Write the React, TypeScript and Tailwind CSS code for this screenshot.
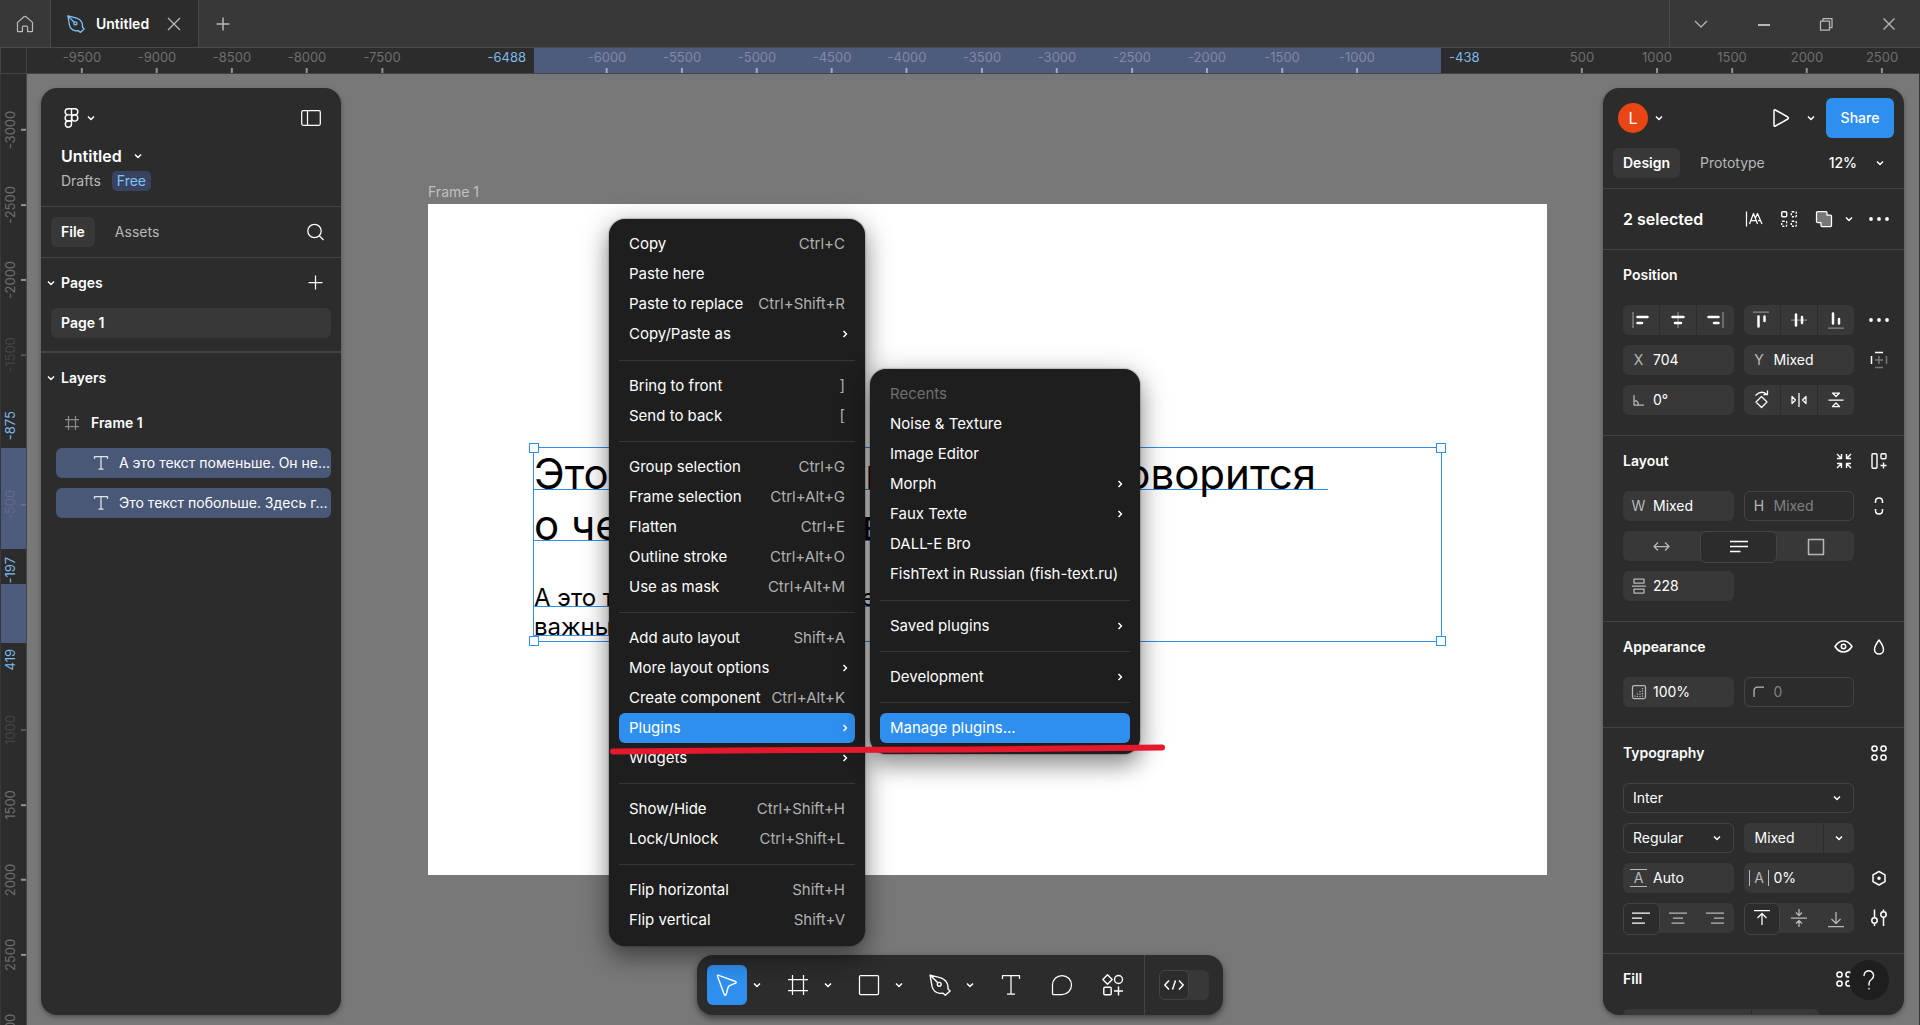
import type { ReactNode } from 'react';

type IconProps = { w?: number; h?: number; sw?: number; className?: string; children: ReactNode };

function Icon({ w = 30, h = 30, sw = 1.25, className, children }: IconProps) {
    return (
        <svg
            width={w}
            height={h}
            viewBox={`0 0 ${w} ${h}`}
            fill="none"
            stroke="currentColor"
            strokeWidth={sw}
            strokeLinejoin="round"
            className={className}
            aria-hidden="true"
        >
            {children}
        </svg>
    );
}

const Chevron = ({ className }: { className?: string }) => (
    <Icon w={10} h={10} sw={1.5} className={className}>
        <path d="M2 3.5l3 3 3-3" />
    </Icon>
);

const ChevronRight = () => (
    <Icon w={10} h={10} sw={1.5} className="text-white">
        <path d="M3.5 2l3 3-3 3" />
    </Icon>
);

const Pen = ({ size, sw = 1.25 }: { size: number; sw?: number }) => (
    <svg width={size} height={size} viewBox="0 0 24 24" fill="none" stroke="currentColor" strokeWidth={sw} strokeLinejoin="round" aria-hidden="true">
        <path d="M1.2 1.2 13 4.2q6.6 2.4 7.6 8.8l.2 3.3 2.2 2.2-5.2 4.8-2.4-2.4-3.9.2Q5 20 3.3 13.5z" />
        <path d="M1.2 1.2l8.4 8.4" />
        <circle cx="11.2" cy="11.2" r="2.1" />
    </svg>
);

const Dots = () => (
    <Icon>
        <g fill="currentColor" stroke="none">
            <circle cx="7" cy="15" r="1.9" />
            <circle cx="15" cy="15" r="1.9" />
            <circle cx="23" cy="15" r="1.9" />
        </g>
    </Icon>
);

const Styles = () => (
    <Icon sw={1.5}>
        <circle cx="10.5" cy="10.5" r="2.6" />
        <circle cx="19.5" cy="10.5" r="2.6" />
        <circle cx="10.5" cy="19.5" r="2.6" />
        <circle cx="19.5" cy="19.5" r="2.6" />
    </Icon>
);

/* ---------- Rulers ---------- */

type Mark = { v: number; tone: string; tick?: string };

const plain = 'text-[#6e6e6e]';
const xMarks: Mark[] = [
    ...[-9500, -9000, -8500, -8000, -7500].map((v) => ({ v, tone: plain, tick: 'bg-[#949494]' })),
    ...[-6000, -5500, -5000, -4500, -4000, -3500, -3000, -2500, -2000, -1500, -1000].map((v) => ({
        v,
        tone: 'text-[#7f89a6]',
        tick: 'bg-[#a3abc0]',
    })),
    ...[500, 1000, 1500, 2000, 2500].map((v) => ({ v, tone: plain, tick: 'bg-[#949494]' })),
];

const yMarks: Mark[] = [
    { v: -3000, tone: plain, tick: 'bg-[#949494]' },
    { v: -2500, tone: plain, tick: 'bg-[#949494]' },
    { v: -2000, tone: plain, tick: 'bg-[#949494]' },
    { v: -1500, tone: 'text-[#444444]', tick: 'bg-[#555555]' },
    { v: -500, tone: 'text-[#5f6a89]', tick: 'bg-[#66718f]' },
    { v: 1000, tone: 'text-[#444444]', tick: 'bg-[#555555]' },
    { v: 1500, tone: plain, tick: 'bg-[#949494]' },
    { v: 2000, tone: plain, tick: 'bg-[#949494]' },
    { v: 2500, tone: plain, tick: 'bg-[#949494]' },
    { v: 3000, tone: plain, tick: 'bg-[#949494]' },
];

const ZOOM = 0.15;
const toX = (v: number) => 55 + Math.round((v + 9500) * ZOOM);
const toY = (v: number) => 56 + Math.round((v + 3000) * ZOOM);

function TopRuler() {
    return (
        <div className="flex h-[26px] shrink-0 border-b border-[#444444] bg-[#2c2c2c] text-[13px] leading-[18px]">
            <div className="w-[27px] shrink-0 border-r border-l border-[#444444]" />
            <div className="relative flex-1 overflow-hidden">
                <div className="absolute inset-y-0 bg-[#4f5b7c]" style={{ left: toX(-6488), width: toX(-438) - toX(-6488) }} />
                {xMarks.map((m) => (
                    <div key={m.v} className="absolute inset-y-0 flex -translate-x-1/2 flex-col items-center justify-between" style={{ left: toX(m.v) }}>
                        <span className={m.tone}>{m.v}</span>
                        <span className={`h-[5px] w-0.5 ${m.tick}`} />
                    </div>
                ))}
                <span className="absolute -translate-x-full pr-2 text-[#7cb8ea]" style={{ left: toX(-6488) }}>-6488</span>
                <span className="absolute pl-2 text-[#7cb8ea]" style={{ left: toX(-438) }}>-438</span>
            </div>
        </div>
    );
}

function SideRuler() {
    return (
        <div className="relative w-[26px] shrink-0 overflow-hidden border-r border-[#444444] bg-[#2c2c2c] text-[13px] leading-[18px]">
            <div className="absolute inset-x-0 bg-[#4f5b7c]" style={{ top: toY(-875) - 1, height: toY(-197) - toY(-875) }} />
            <div className="absolute inset-x-0 bg-[#4f5b7c]" style={{ top: 510, height: toY(419) - 510 }} />
            {yMarks.map((m) => (
                <div key={m.v} className="absolute inset-x-0 flex -translate-y-1/2 items-center justify-between" style={{ top: toY(m.v) }}>
                    <span className={`rotate-180 [writing-mode:vertical-rl] ${m.tone}`}>{m.v}</span>
                    <span className={`h-0.5 w-[5px] ${m.tick}`} />
                </div>
            ))}
            <span className="absolute top-[337px] rotate-180 text-[#7cb8ea] [writing-mode:vertical-rl]">-875</span>
            <span className="absolute top-[483px] rotate-180 text-[#7cb8ea] [writing-mode:vertical-rl]">-197</span>
            <span className="absolute top-[575px] rotate-180 text-[#7cb8ea] [writing-mode:vertical-rl]">419</span>
        </div>
    );
}

/* ---------- Title bar ---------- */

function TitleBar() {
    return (
        <header className="flex h-12 shrink-0 items-stretch border-b border-[#4a4a4a] bg-[#383838] text-[#b8b8b8]">
            <button aria-label="Home" className="flex w-[50px] items-center justify-center">
                <Icon w={18} h={18}>
                    <path d="M1.5 7.4 8 1.8q1-.8 2 0l6.500 5.600V16q0 .6-.6.6h-4.300V12q0-1-1-1H7.400q-1 0-1 1v4.600H2.100q-.6 0-.6-.6z" />
                </Icon>
            </button>
            <div className="flex w-[149px] items-center border-x border-[#4a4a4a] bg-[#2c2c2c] pr-4 pl-4">
                <span className="text-[#7cc4f8]"><Pen size={18} sw={1.7} /></span>
                <span className="ml-[11px] flex-1 text-sm font-semibold text-white">Untitled</span>
                <button aria-label="Close tab">
                    <Icon w={16} h={16}><path d="M2 2l12 12M14 2 2 14" /></Icon>
                </button>
            </div>
            <button aria-label="New tab" className="flex w-12 items-center justify-center">
                <Icon w={16} h={16} sw={1.5}><path d="M8 1.500v13M1.500 8h13" /></Icon>
            </button>
            <div className="ml-auto flex w-[251px] border-l border-[#4a4a4a]">
                <button aria-label="Tabs" className="flex flex-1 items-center justify-center">
                    <Icon w={16} h={16}><path d="M2 5l6 6 6-6" /></Icon>
                </button>
                <button aria-label="Minimize" className="flex flex-1 items-center justify-center">
                    <Icon w={16} h={16} sw={2}><path d="M2 9h12" /></Icon>
                </button>
                <button aria-label="Restore" className="flex flex-1 items-center justify-center">
                    <Icon w={16} h={16}><path d="M2.500 5h9v9h-9zM5 5V2.500h9v9h-2.500" /></Icon>
                </button>
                <button aria-label="Close" className="flex flex-1 items-center justify-center">
                    <Icon w={16} h={16}><path d="M2.500 2.500l11 11M13.500 2.500l-11 11" /></Icon>
                </button>
            </div>
        </header>
    );
}

/* ---------- Left panel ---------- */

function TextLayer({ name }: { name: string }) {
    return (
        <li className="pl-[5px]">
            <button className="flex h-[30px] w-full items-center rounded-md bg-[#4a5878] pl-[37px] whitespace-nowrap">
                <Icon w={16} h={16} className="shrink-0 text-[#dfe3ec]"><path d="M1.500 4V1.500h13V4M8 1.500v12.500M5.500 14h5" /></Icon>
                <span className="ml-2.5">{name}</span>
            </button>
        </li>
    );
}

function LeftPanel() {
    return (
        <aside className="my-3.5 mb-2.5 ml-3.5 flex w-[300px] shrink-0 flex-col rounded-2xl bg-[#2c2c2c] shadow-[0_2px_5px_rgba(0,0,0,0.35)]">
            <div className="h-[119px] border-b border-[#444444] px-5 pt-[15px]">
                <div className="flex h-[30px] items-center justify-between">
                    <button aria-label="Main menu" className="flex items-center gap-1.5 pl-[3px]">
                        <Icon w={16} h={20} sw={1.4}>
                            <path d="M7.500.8H4.200a3.050 3.050 0 0 0 0 6.100h3.300zM7.500.8h3.300a3.050 3.050 0 0 1 0 6.100H7.500zM7.500 6.900H4.200a3.050 3.050 0 0 0 0 6.100h3.300z" />
                            <circle cx="10.700" cy="10" r="3.100" />
                            <path d="M7.500 13H4.200a3.100 3.100 0 1 0 3.300 3.100z" />
                        </Icon>
                        <Chevron />
                    </button>
                    <button aria-label="Minimize UI">
                        <Icon w={20} h={20}><rect x=".7" y="2.700" width="18.600" height="14.600" rx="1.500" /><path d="M6.500 2.700v14.600" /></Icon>
                    </button>
                </div>
                <button className="mt-[13px] flex items-center gap-[11px] text-base leading-5 font-semibold">
                    Untitled
                    <Chevron />
                </button>
                <div className="mt-[5px] flex items-center gap-[11px] leading-5">
                    <a href="#drafts" className="text-[#b8b8b8]">Drafts</a>
                    <span className="rounded-[5px] bg-[#394360] px-[5px] text-[#7cc4f8]">Free</span>
                </div>
            </div>
            <div className="flex h-[51px] items-center border-b border-[#444444] px-2.5">
                <button className="h-[30px] rounded-md bg-[#383838] px-2.5 font-semibold">File</button>
                <button className="ml-2.5 h-[30px] px-2.5 text-[#b8b8b8]">Assets</button>
                <button aria-label="Search" className="ml-auto">
                    <Icon><circle cx="13.500" cy="14" r="6.700" /><path d="M18.500 19l4 4" /></Icon>
                </button>
            </div>
            <div className="border-b-2 border-[#444444] px-2.5 pb-[13px]">
                <div className="flex h-[50px] items-center">
                    <button className="-ml-[5px] flex items-center gap-[5px] font-semibold"><Chevron /> Pages</button>
                    <button aria-label="Add page" className="ml-auto"><Icon><path d="M14.500 7.500v14M7.500 14.500h14" /></Icon></button>
                </div>
                <button className="flex h-[30px] w-full items-center rounded-md bg-[#383838] px-2.5 font-semibold">Page 1</button>
            </div>
            <div className="px-2.5">
                <button className="-ml-[5px] flex h-[50px] items-center gap-[5px] font-semibold"><Chevron /> Layers</button>
                <ul className="mt-[5px] flex flex-col gap-2.5">
                    <li>
                        <button className="flex h-[30px] items-center pl-3 font-semibold">
                            <Icon w={18} h={18} className="mr-2.5 text-[#8a8a8a]"><path d="M5.500 2v14M12.500 2v14M2 5.500h14M2 12.500h14" /></Icon>
                            Frame 1
                        </button>
                    </li>
                    <TextLayer name="А это текст поменьше. Он не..." />
                    <TextLayer name="Это текст побольше. Здесь г..." />
                </ul>
            </div>
        </aside>
    );
}

/* ---------- Right panel ---------- */

function Section({ title, actions, children }: { title: string; actions?: ReactNode; children: ReactNode }) {
    return (
        <section className="border-b border-[#444444] pr-2.5 pb-5 pl-5">
            <div className="mb-[5px] flex h-[50px] items-center">
                <h2 className="flex-1 font-semibold">{title}</h2>
                <div className="flex gap-[5px]">{actions}</div>
            </div>
            <div className="grid grid-cols-[1fr_1fr_30px] gap-2.5">{children}</div>
        </section>
    );
}

function Field({ label, icon, value, dim }: { label: string; icon: ReactNode; value: string; dim?: boolean }) {
    return (
        <label className={`flex h-[30px] items-center rounded-md border ${dim ? 'border-[#444444]' : 'border-[#383838] bg-[#383838]'}`}>
            <span className="flex w-[29px] shrink-0 justify-center text-[#b8b8b8]">{icon}</span>
            <input aria-label={label} defaultValue={value} className={`w-0 flex-1 bg-transparent outline-none ${dim ? 'text-[#808080]' : 'text-white'}`} />
        </label>
    );
}

function ButtonGroup({ items }: { items: [string, ReactNode][] }) {
    return (
        <div className="grid h-[30px] grid-cols-3 gap-px overflow-hidden rounded-md">
            {items.map(([label, icon]) => (
                <button key={label} aria-label={label} className="flex items-center justify-center bg-[#383838]">
                    {icon}
                </button>
            ))}
        </div>
    );
}

function Segmented({ items, active, wide }: { items: [string, ReactNode][]; active: number; wide?: boolean }) {
    return (
        <div className={`grid h-[30px] grid-cols-3 rounded-md bg-[#383838] ${wide ? 'col-span-2' : ''}`}>
            {items.map(([label, icon], i) => (
                <button
                    key={label}
                    aria-label={label}
                    aria-pressed={i === active}
                    className={`flex items-center justify-center rounded-md border ${i === active ? 'border-[#444444] bg-[#2c2c2c] text-white' : 'border-transparent text-[#b8b8b8]'}`}
                >
                    {icon}
                </button>
            ))}
        </div>
    );
}

const IconButton = ({ label, children }: { label: string; children: ReactNode }) => (
    <button aria-label={label} className="flex size-[30px] items-center justify-center">{children}</button>
);

function DropDown({ label, value, className = '' }: { label: string; value: string; className?: string }) {
    return (
        <label className={`relative flex h-[30px] items-center rounded-md border border-[#444444] ${className}`}>
            <select aria-label={label} defaultValue={value} className="h-full w-full appearance-none bg-transparent pl-[9px] outline-none">
                <option>{value}</option>
            </select>
            <Chevron className="pointer-events-none absolute right-[11px]" />
        </label>
    );
}

function RightPanel() {
    return (
        <aside className="mt-3.5 mr-[15px] mb-2.5 ml-auto w-[301px] shrink-0 overflow-hidden rounded-2xl bg-[#2c2c2c] shadow-[0_2px_5px_rgba(0,0,0,0.35)]">
            <div className="border-b border-[#444444] p-2.5">
                <div className="flex h-10 items-center">
                    <button aria-label="Account" className="flex items-center gap-1.5 pl-[5px]">
                        <span className="flex size-[30px] items-center justify-center rounded-full bg-[#ea4514] text-base">L</span>
                        <Chevron />
                    </button>
                    <button aria-label="Present" className="ml-auto">
                        <Icon w={20} h={20} sw={1.5}><path d="M3 2.800v14.400q0 1.600 1.400.8l12.400-7q1.400-1 0-2l-12.400-7Q3 1.200 3 2.800z" /></Icon>
                    </button>
                    <button aria-label="Present options" className="mr-2.5 ml-[15px]"><Chevron /></button>
                    <button className="h-10 w-[68px] rounded-md bg-[#2f8fee] font-medium">Share</button>
                </div>
                <div className="mt-2.5 flex h-[30px] items-center">
                    <button className="h-[30px] rounded-md bg-[#383838] px-2.5 font-semibold">Design</button>
                    <button className="ml-2.5 px-2.5 text-[#b8b8b8]">Prototype</button>
                    <button className="mr-[9px] ml-auto flex items-center gap-[18px] font-medium">12% <Chevron /></button>
                </div>
            </div>

            <div className="flex h-[61px] items-center border-b border-[#444444] pr-2.5 pl-5">
                <h2 className="flex-1 text-base font-semibold">2 selected</h2>
                <IconButton label="Scale text">
                    <Icon><path d="M7.500 7.500v15M10.500 20l4-10.500 4 10.500M12 16.500h5M16.500 14l2-4.500 4.500 10.500M19 16.500h2.500" /></Icon>
                </IconButton>
                <span className="w-[5px]" />
                <IconButton label="Arrange">
                    <Icon sw={1.4}>
                        <rect x="7.700" y="7.700" width="5" height="5" rx="1" />
                        <g strokeDasharray="2 1.400">
                            <rect x="17.300" y="7.700" width="5" height="5" rx="1" />
                            <rect x="7.700" y="17.300" width="5" height="5" rx="1" />
                            <rect x="17.300" y="17.300" width="5" height="5" rx="1" />
                        </g>
                    </Icon>
                </IconButton>
                <span className="w-[5px]" />
                <IconButton label="Union">
                    <Icon><path fill="#777777" d="M8.500 7.500H17q1 0 1 1V11h3.500q1 0 1 1v9.500q0 1-1 1H13q-1 0-1-1V18.500H8.500q-1 0-1-1v-9q0-1 1-1z" /></Icon>
                </IconButton>
                <button aria-label="Boolean options" className="mr-2.5 ml-[5px]"><Chevron /></button>
                <IconButton label="More"><Dots /></IconButton>
            </div>

            <Section title="Position">
                <ButtonGroup
                    items={[
                        ['Align left', <Icon key="i"><path stroke="#8a8a8a" d="M7 7v16" /><path strokeWidth="2.500" strokeLinecap="round" d="M11.500 12h10M11.500 18h4.500" /></Icon>],
                        ['Align horizontal centers', <Icon key="i"><path stroke="#8a8a8a" d="M15 7v16" /><path strokeWidth="2.500" strokeLinecap="round" d="M9.500 12h11M12 18h6" /></Icon>],
                        ['Align right', <Icon key="i"><path stroke="#8a8a8a" d="M23 7v16" /><path strokeWidth="2.500" strokeLinecap="round" d="M8.500 12h10M14 18h4.500" /></Icon>],
                    ]}
                />
                <ButtonGroup
                    items={[
                        ['Align top', <Icon key="i"><path stroke="#8a8a8a" d="M6 7h16" /><path strokeWidth="2.500" strokeLinecap="round" d="M11.500 11.500v10M17.500 11.500V16" /></Icon>],
                        ['Align vertical centers', <Icon key="i"><path stroke="#8a8a8a" d="M7 15h16" /><path strokeWidth="2.500" strokeLinecap="round" d="M12 9.500v11M18 12v6" /></Icon>],
                        ['Align bottom', <Icon key="i"><path stroke="#8a8a8a" d="M7 23h16" /><path strokeWidth="2.500" strokeLinecap="round" d="M12 8.500v10M18 14v4.500" /></Icon>],
                    ]}
                />
                <IconButton label="More position options"><Dots /></IconButton>

                <Field label="X position" icon="X" value="704" />
                <Field label="Y position" icon="Y" value="Mixed" />
                <IconButton label="Constraints">
                    <Icon sw={1.500}><path d="M11 7.500h8M7.500 11v8" /><path stroke="#777777" d="M15 11v8M11 15h8M22.500 11v8M11 22.500h8" /></Icon>
                </IconButton>

                <Field label="Rotation" value="0°" icon={<Icon w={16} h={16}><path d="M3 3v10h10M3 8.500q4.500 0 4.500 4.500" /></Icon>} />
                <ButtonGroup
                    items={[
                        ['Rotate 90°', <Icon key="i"><path d="M14.500 11.500l5.500 5.500-5.500 5.500L9 17zM8.500 10.500q5.500-6 11.500-1M20.500 5.500v4h-4" /></Icon>],
                        ['Flip horizontal', <Icon key="i"><path d="M15 8v14M8 11.500v7l3.500-3.500zM22 11.500v7L18.500 15z" /></Icon>],
                        ['Flip vertical', <Icon key="i"><path d="M7.500 15h15M11.500 8h7L15 11.500zM11.500 21.500h7L15 18z" /></Icon>],
                    ]}
                />
            </Section>

            <Section
                title="Layout"
                actions={
                    <>
                        <IconButton label="Resize to fit">
                            <Icon sw={1.400}><path d="M8 8l4 4M12.500 8v4.500H8M22 8l-4 4M17.500 8v4.500H22M8 22l4-4M8 17.500h4.500V22M22 22l-4-4M22 17.500h-4.500V22" /></Icon>
                        </IconButton>
                        <IconButton label="Add auto layout">
                            <Icon sw={1.400}><rect x="8" y="7.700" width="5" height="14.600" rx="1" /><rect x="17" y="7.700" width="5" height="5" rx="1" /><path d="M19.500 16.500v6M16.500 19.500h6" /></Icon>
                        </IconButton>
                    </>
                }
            >
                <Field label="Width" icon="W" value="Mixed" />
                <Field label="Height" icon="H" value="Mixed" dim />
                <IconButton label="Lock aspect ratio">
                    <Icon sw={1.500}><path d="M11.500 12v-1.500q0-3.500 3.500-3.500t3.500 3.500V12M11.500 18v1.500q0 3.500 3.500 3.500t3.500-3.500V18" /></Icon>
                </IconButton>
                <Segmented
                    wide
                    active={1}
                    items={[
                        ['Auto width', <Icon key="i"><path d="M7.500 14.500h14M11 10.500l-4 4 4 4M18 10.500l4 4-4 4" /></Icon>],
                        ['Auto height', <Icon key="i" sw={1.500}><path d="M6 9.500h18M6 14.500h18M6 19.500h10.500" /></Icon>],
                        ['Fixed size', <Icon key="i" sw={1.500}><path d="M7.500 7.500h15v15h-15z" /></Icon>],
                    ]}
                />
                <span />
                <Field label="Spacing" value="228" icon={<Icon w={16} h={18}><path d="M3 2h10v4H3zM3 12h10v4H3zM1 9h14" /></Icon>} />
            </Section>

            <Section
                title="Appearance"
                actions={
                    <>
                        <IconButton label="Hide">
                            <Icon sw={1.500}><path d="M6 14.500q3.500-5.500 8.500-5.500t8.500 5.500q-3.500 5.500-8.500 5.500T6 14.500z" /><circle cx="14.500" cy="14.500" r="2.200" /></Icon>
                        </IconButton>
                        <IconButton label="Blend mode">
                            <Icon sw={1.500}><path d="M15 8q-4.500 6-4.500 9.500a4.500 4.500 0 0 0 9 0Q19.500 14 15 8z" /></Icon>
                        </IconButton>
                    </>
                }
            >
                <Field
                    label="Opacity"
                    value="100%"
                    icon={
                        <Icon w={16} h={16}>
                            <rect x="1.500" y="1.500" width="13" height="13" rx="1.500" />
                            <path strokeDasharray="1.200 1.300" d="M11.500 4v9M9 7v6M6.500 9.500V13M4 11.500V13" />
                        </Icon>
                    }
                />
                <Field label="Corner radius" value="0" dim icon={<Icon w={14} h={14}><path d="M2 12V6q0-4 4-4h6" /></Icon>} />
            </Section>

            <Section title="Typography" actions={<IconButton label="Text styles"><Styles /></IconButton>}>
                <DropDown label="Font family" value="Inter" className="col-span-2" />
                <span />
                <DropDown label="Font weight" value="Regular" />
                <div className="flex h-[30px] gap-px overflow-hidden rounded-md">
                    <input aria-label="Font size" defaultValue="Mixed" className="w-0 flex-1 bg-[#383838] pl-[11px] outline-none" />
                    <button aria-label="Font sizes" className="flex w-[30px] items-center justify-center bg-[#383838]"><Chevron /></button>
                </div>
                <span />
                <Field label="Line height" value="Auto" icon={<span className="border-y border-[#b8b8b8] px-1 leading-4">A</span>} />
                <Field label="Letter spacing" value="0%" icon={<span className="border-x border-[#b8b8b8] px-1 leading-4">A</span>} />
                <IconButton label="Variables">
                    <Icon sw={1.500}><path d="M15 8.500l6 3.300v6.900L15 22l-6-3.300v-6.900z" /><circle cx="15" cy="15.300" r="1" fill="currentColor" /></Icon>
                </IconButton>
                <Segmented
                    active={0}
                    items={[
                        ['Text align left', <Icon key="i"><path d="M6 9h18M6 14h10M6 19h13" /></Icon>],
                        ['Text align center', <Icon key="i"><path d="M6 9h18M10 14h10M8.500 19h13" /></Icon>],
                        ['Text align right', <Icon key="i"><path d="M6 9h18M14 14h10M11 19h13" /></Icon>],
                    ]}
                />
                <Segmented
                    active={0}
                    items={[
                        ['Align text top', <Icon key="i"><path d="M7 6.500h16M15 21v-11M10.500 14l4.500-4.500 4.500 4.500" /></Icon>],
                        ['Align text middle', <Icon key="i"><path d="M7 14h16M15 5v6M12 8.500l3 3 3-3M15 23v-6M12 19.500l3-3 3 3" /></Icon>],
                        ['Align text bottom', <Icon key="i"><path d="M7 22.500h16M15 8v11M10.500 15l4.500 4.500 4.500-4.500" /></Icon>],
                    ]}
                />
                <IconButton label="Type settings">
                    <Icon sw={1.500}><path d="M10.500 6.500v8M10.500 20.500V23M19.500 6.500v2M19.500 14.500V23" /><circle cx="10.500" cy="17.500" r="2.700" /><circle cx="19.500" cy="11.500" r="2.700" /></Icon>
                </IconButton>
            </Section>

            <Section title="Fill" actions={<><IconButton label="Fill styles"><Styles /></IconButton><span className="w-[30px]" /></>}>
                <div className="col-span-2 mr-[35px] flex h-[30px] gap-px overflow-hidden rounded-md">
                    <div className="flex-1 bg-[#383838]" />
                    <div className="w-[67px] bg-[#383838]" />
                </div>
            </Section>
        </aside>
    );
}

/* ---------- Toolbar ---------- */

function Tool({ label, children, active, menu }: { label: string; children: ReactNode; active?: boolean; menu?: boolean }) {
    return (
        <div className="flex items-center">
            <button aria-label={label} className={`flex size-10 items-center justify-center rounded-md ${active ? 'bg-[#2f8fee]' : ''}`}>
                {children}
            </button>
            {menu && (
                <button aria-label={`${label} options`} className="flex w-5 justify-center"><Chevron /></button>
            )}
        </div>
    );
}

function Toolbar() {
    return (
        <div className="absolute bottom-2.5 left-1/2 flex h-[60px] -translate-x-1/2 items-center gap-[11px] rounded-2xl bg-[#2c2c2c] pl-2.5 shadow-[0_3px_7px_rgba(0,0,0,0.5)]">
            <Tool label="Move" active menu>
                <Icon w={24} h={24} sw={1.400}><path d="M2.600 3.400q-.5-1.600 1-1.100l17 6.200q1.400.9 0 1.600l-6 2.500q-1 .5-1.400 1.400l-2.100 7.600q-.9 1.400-1.800 0z" /></Icon>
            </Tool>
            <Tool label="Frame" menu>
                <Icon w={24} h={24}><path d="M6.500 2v20M17.500 2v20M2 6.500h20M2 17.500h20" /></Icon>
            </Tool>
            <Tool label="Rectangle" menu>
                <Icon w={24} h={24}><rect x="2.500" y="2.500" width="19" height="19" rx="1" /></Icon>
            </Tool>
            <Tool label="Pen" menu>
                <Pen size={22} sw={1.500} />
            </Tool>
            <Tool label="Text">
                <Icon w={24} h={24}><path d="M3.500 6V2.500h17V6M12 2.500v18.500M8 21h8" /></Icon>
            </Tool>
            <Tool label="Comment">
                <Icon w={24} h={24}><path d="M3.500 21.500q-1 0-1-1V12a9.500 9.500 0 1 1 9.500 9.500z" /></Icon>
            </Tool>
            <Tool label="Actions">
                <Icon w={24} h={24} sw={1.400}>
                    <path d="M6.500 1.800l4.700 4.700-4.700 4.700-4.700-4.700zM17.500 13.500v9M13 18h9" />
                    <circle cx="17.500" cy="6.500" r="4" />
                    <rect x="2.800" y="14.300" width="7.400" height="7.400" rx="1" />
                </Icon>
            </Tool>
            <div className="flex h-full items-center border-l border-[#444444] px-3.5">
                <label className="flex h-[30px] w-[50px] cursor-pointer items-center rounded-md bg-[#383838]">
                    <input type="checkbox" role="switch" aria-label="Dev Mode" className="sr-only" />
                    <span className="flex size-[30px] items-center justify-center rounded-md border border-[#444444] bg-[#2c2c2c]">
                        <Icon w={22} h={16} sw={1.500}><path d="M6 3.500L1.800 8 6 12.500M16 3.500l4.200 4.500-4.200 4.500M12.500 3.500l-3 9" /></Icon>
                    </span>
                </label>
            </div>
        </div>
    );
}

/* ---------- Context menus ---------- */

type Item = { label: string; keys?: string; sub?: boolean; active?: boolean; muted?: boolean };

const contextMenu: Item[][] = [
    [
        { label: 'Copy', keys: 'Ctrl+C' },
        { label: 'Paste here' },
        { label: 'Paste to replace', keys: 'Ctrl+Shift+R' },
        { label: 'Copy/Paste as', sub: true },
    ],
    [
        { label: 'Bring to front', keys: ']' },
        { label: 'Send to back', keys: '[' },
    ],
    [
        { label: 'Group selection', keys: 'Ctrl+G' },
        { label: 'Frame selection', keys: 'Ctrl+Alt+G' },
        { label: 'Flatten', keys: 'Ctrl+E' },
        { label: 'Outline stroke', keys: 'Ctrl+Alt+O' },
        { label: 'Use as mask', keys: 'Ctrl+Alt+M' },
    ],
    [
        { label: 'Add auto layout', keys: 'Shift+A' },
        { label: 'More layout options', sub: true },
        { label: 'Create component', keys: 'Ctrl+Alt+K' },
        { label: 'Plugins', sub: true, active: true },
        { label: 'Widgets', sub: true },
    ],
    [
        { label: 'Show/Hide', keys: 'Ctrl+Shift+H' },
        { label: 'Lock/Unlock', keys: 'Ctrl+Shift+L' },
    ],
    [
        { label: 'Flip horizontal', keys: 'Shift+H' },
        { label: 'Flip vertical', keys: 'Shift+V' },
    ],
];

const pluginsMenu: Item[][] = [
    [
        { label: 'Recents', muted: true },
        { label: 'Noise & Texture' },
        { label: 'Image Editor' },
        { label: 'Morph', sub: true },
        { label: 'Faux Texte', sub: true },
        { label: 'DALL-E Bro' },
        { label: 'FishText in Russian (fish-text.ru)' },
    ],
    [{ label: 'Saved plugins', sub: true }],
    [{ label: 'Development', sub: true }],
    [{ label: 'Manage plugins...', active: true }],
];

function Menu({ groups, className }: { groups: Item[][]; className: string }) {
    return (
        <div
            role="menu"
            className={`absolute rounded-2xl bg-[#1e1e1e] px-2.5 pt-2.5 pb-[11px] text-[15px] shadow-[0_12px_20px_rgba(0,0,0,0.25),0_6px_30px_rgba(0,0,0,0.3),0_0_2px_rgba(0,0,0,0.6)] ${className}`}
        >
            {groups.map((group, i) => (
                <div key={i} role="group" className={i > 0 ? `border-t border-[#383838] pt-2.5 ${i === 1 ? 'mt-[11px]' : 'mt-2.5'}` : ''}>
                    {group.map((item) => (
                        <button
                            key={item.label}
                            role="menuitem"
                            disabled={item.muted}
                            className={`flex h-[30px] w-full items-center justify-between rounded-md pl-2.5 whitespace-nowrap ${item.sub ? 'pr-[5px]' : 'pr-2.5'} ${item.active ? 'bg-[#2f8fee]' : ''} ${item.muted ? 'text-[#6e6e6e]' : 'text-white'}`}
                        >
                            {item.label}
                            {item.keys && <span className="text-[#b0b0b0]">{item.keys}</span>}
                            {item.sub && <ChevronRight />}
                        </button>
                    ))}
                </div>
            ))}
        </div>
    );
}

/* ---------- Canvas ---------- */

const Handle = ({ className }: { className: string }) => (
    <span className={`absolute size-2.5 border border-[#2f8fee] bg-white ${className}`} />
);

function Artboard() {
    return (
        <div className="absolute top-[104px] left-[401px]">
            <p className="h-[26px] leading-7 text-[#c0c0c0]">Frame 1</p>
            <div className="relative h-[671px] w-[1119px] bg-white text-black">
                <div className="absolute top-[244px] left-[106px] h-[193px] w-[907px] outline outline-[#2f8fee]">
                    <div className="flex h-full flex-col justify-between whitespace-pre underline decoration-[#2f8fee] decoration-1 underline-offset-0 [font-optical-sizing:none] [text-decoration-skip-ink:none]">
                        <p className="text-[42px] leading-[51px]">{'Это текст побольше. Здесь говорится \nо чем-то очень важном.'}</p>
                        <p className="text-2xl leading-[29px]">{'А это текст поменьше. Он не такой уже\nважный'}</p>
                    </div>
                    <Handle className="-top-[5px] -left-[5px]" />
                    <Handle className="-top-[5px] -right-[5px]" />
                    <Handle className="-bottom-[5px] -left-[5px]" />
                    <Handle className="-right-[5px] -bottom-[5px]" />
                </div>
            </div>
        </div>
    );
}

export default function App() {
    return (
        <div className="relative flex h-screen flex-col overflow-hidden bg-[#2c2c2c] font-['Inter','Liberation_Sans',sans-serif] text-sm text-white">
            <TitleBar />
            <TopRuler />
            <div className="flex min-h-0 flex-1 border-x border-[#383838]">
                <SideRuler />
                <main className="relative flex min-w-0 flex-1 overflow-hidden bg-[#787878]">
                    <Artboard />
                    <div className="relative flex min-w-0 flex-1">
                        <LeftPanel />
                        <RightPanel />
                    </div>
                </main>
            </div>
            <Toolbar />
            <button aria-label="Help" className="absolute right-[31px] bottom-[25px] flex size-10 items-center justify-center rounded-full bg-[#1e1e1e]">
                <Icon w={20} h={22} sw={1.400}>
                    <path strokeLinecap="round" d="M5 6.500a4.800 4.800 0 1 1 7.500 4q-2.500 1.500-2.500 4V16M10 19.500v.4" />
                </Icon>
            </button>
            <Menu groups={contextMenu} className="top-[219px] left-[609px] w-64" />
            <Menu groups={pluginsMenu} className="top-[369px] left-[870px] w-[270px]" />
            <svg className="pointer-events-none absolute top-[740px] left-[605px]" width="565" height="18" fill="none" aria-hidden="true">
                <path d="M8 11.500 200 10 360 9.500 557 7.500" stroke="#e5182d" strokeWidth="6" strokeLinecap="round" />
            </svg>
        </div>
    );
}
